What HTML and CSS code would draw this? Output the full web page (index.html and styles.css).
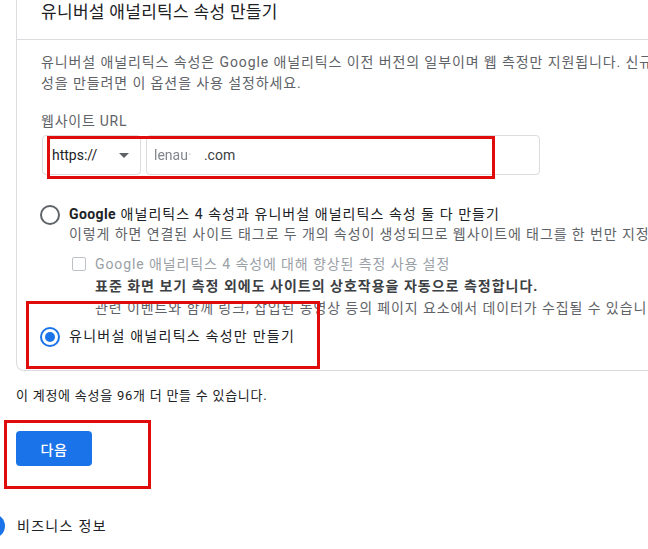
FILE: index.html
```html
<!DOCTYPE html>
<html lang="ko">
<head>
<meta charset="utf-8">
<title>유니버설 애널리틱스 속성 만들기</title>
<link rel="stylesheet" href="styles.css">
</head>
<body>
<div class="page">
  <section class="card">
    <div class="card-header">
      <h2 class="title">유니버설 애널리틱스 속성 만들기</h2>
    </div>
    <div class="card-body">
      <p class="desc">
        <span class="line">유니버설 애널리틱스 속성은 Google 애널리틱스 이전 버전의 일부이며 웹 측정만 지원됩니다. 신규 Google 애널리틱스 4 속</span>
        <span class="line">성을 만들려면 이 옵션을 사용 설정하세요.</span>
      </p>
      <div class="field-label">웹사이트 URL</div>
      <div class="url-group">
        <div class="select">
          <span class="select-text">https://</span>
          <span class="caret"></span>
        </div>
        <div class="url-input"><span class="smudge">lenau</span><span class="smudge faint">·</span><span class="url-tail">.com</span></div>
      </div>

      <div class="options">
        <div class="option">
          <span class="radio"></span>
          <div class="option-text">
            <div class="option-label"><span class="brand">Google</span> 애널리틱스 4 속성과 유니버설 애널리틱스 속성 둘 다 만들기</div>
            <div class="option-help">이렇게 하면 연결된 사이트 태그로 두 개의 속성이 생성되므로 웹사이트에 태그를 한 번만 지정하면 됩니다.</div>
            <div class="sub-option">
              <span class="checkbox"></span>
              <div class="sub-text">
                <div class="sub-label">Google 애널리틱스 4 속성에 대해 향상된 측정 사용 설정</div>
                <div class="sub-strong">표준 화면 보기 측정 외에도 사이트의 상호작용을 자동으로 측정합니다.</div>
                <div class="sub-help">관련 이벤트와 함께 링크, 삽입된 동영상 등의 페이지 요소에서 데이터가 수집될 수 있습니다.</div>
              </div>
            </div>
          </div>
        </div>
        <div class="option option-selected">
          <span class="radio checked"></span>
          <div class="option-text">
            <div class="option-label wide">유니버설 애널리틱스 속성만 만들기</div>
          </div>
        </div>
      </div>
    </div>
    <span class="mark mark-url"></span>
    <span class="mark mark-option"></span>
  </section>

  <p class="quota">이 계정에 속성을 96개 더 만들 수 있습니다.</p>

  <div class="actions">
    <button class="btn-primary" type="button">다음</button>
    <span class="mark mark-button"></span>
  </div>

  <div class="step">
    <span class="step-dot"></span>
    <span class="step-label">비즈니스 정보</span>
  </div>
</div>
</body>
</html>
```
FILE: styles.css
```css
* { box-sizing: border-box; }

html, body {
  margin: 0;
  padding: 0;
  background: #ffffff;
}

body {
  font-family: Roboto, "Noto Sans CJK KR", "Noto Sans", sans-serif;
  color: #202124;
  -webkit-font-smoothing: antialiased;
}

.page {
  position: relative;
  width: 648px;
  height: 549px;
  overflow: hidden;
}

/* ---------- card ---------- */
.card {
  position: relative;
  width: 780px;
  margin-left: 16px;
  border: 1px solid #dadce0;
  border-top: none;
  border-radius: 0 0 8px 8px;
}

.card-header {
  height: 40px;
  border-bottom: 1px solid #dadce0;
  padding-left: 24px;
}

.title {
  margin: 0;
  font-size: 17px;
  line-height: 24px;
  font-weight: 400;
  letter-spacing: 0.3px;
  color: #202124;
}

.card-body {
  padding: 12px 24px 23px 24px;
}

.desc {
  margin: 0;
  font-size: 14px;
  line-height: 21px;
  letter-spacing: 0.9px;
  color: #5f6368;
}

.desc .line {
  display: block;
  white-space: nowrap;
}

.field-label {
  margin-top: 17px;
  font-size: 14px;
  line-height: 20px;
  letter-spacing: 0.75px;
  color: #5f6368;
}

.url-group {
  display: flex;
  gap: 5px;
  margin-top: 4px;
  margin-left: 1px;
  height: 40px;
}

.select {
  width: 99px;
  border: 1px solid #dadce0;
  border-radius: 4px;
  display: flex;
  align-items: center;
  padding-left: 9px;
}

.select-text {
  font-size: 14px;
  color: #202124;
}

.caret {
  margin-left: 22px;
  width: 0;
  height: 0;
  border-left: 5px solid transparent;
  border-right: 5px solid transparent;
  border-top: 5px solid #5f6368;
}

.url-input {
  width: 394px;
  border: 1px solid #dadce0;
  border-radius: 4px;
  display: flex;
  align-items: center;
  padding-left: 7px;
  font-size: 14px;
  color: #3c4043;
}

.smudge {
  filter: blur(0.7px);
  color: #80868b;
}

.faint {
  display: inline-block;
  width: 16px;
  color: #c8c8c8;
}

.url-tail {
  color: #3c4043;
}

/* ---------- options ---------- */
.options {
  margin-top: 29px;
  display: flex;
  flex-direction: column;
  gap: 7px;
}

.option {
  display: flex;
  align-items: flex-start;
  gap: 9px;
  margin-left: -1px;
}

.radio {
  flex: none;
  width: 20px;
  height: 20px;
  margin-top: 1px;
  border: 2px solid #5f6368;
  border-radius: 50%;
  display: flex;
  align-items: center;
  justify-content: center;
}

.radio.checked {
  border-color: #1a73e8;
}

.radio.checked::after {
  content: "";
  width: 10px;
  height: 10px;
  border-radius: 50%;
  background: #1a73e8;
}

.option-label {
  font-size: 14px;
  line-height: 20px;
  letter-spacing: 1.05px;
  color: #202124;
  white-space: nowrap;
}

.option-label.wide {
  letter-spacing: 1.25px;
}

.brand {
  font-weight: 700;
  letter-spacing: 0.4px;
}

.option-help {
  font-size: 14px;
  line-height: 20px;
  letter-spacing: 0.9px;
  color: #5f6368;
  white-space: nowrap;
}

.sub-option {
  display: flex;
  align-items: flex-start;
  gap: 9px;
  margin-top: 9px;
  margin-left: 3px;
}

.checkbox {
  flex: none;
  width: 14px;
  height: 14px;
  margin-top: 4px;
  border: 1.5px solid #bdc1c6;
  border-radius: 2px;
}

.sub-text {
  font-size: 14px;
  line-height: 22px;
  letter-spacing: 0.9px;
  white-space: nowrap;
}

.sub-label {
  color: #9aa0a6;
}

.sub-strong {
  font-weight: 700;
  letter-spacing: 1px;
  color: #3c4043;
}

.sub-help {
  color: #5f6368;
}

/* ---------- below card ---------- */
.quota {
  margin: 15px 0 0 16px;
  font-size: 13px;
  line-height: 20px;
  letter-spacing: 0.75px;
  color: #202124;
}

.actions {
  position: relative;
  margin-top: 25px;
  margin-left: 16px;
}

.btn-primary {
  width: 76px;
  height: 35px;
  border: none;
  border-radius: 4px;
  background: #1a73e8;
  color: #ffffff;
  font-family: Roboto, "Noto Sans CJK KR", sans-serif;
  font-size: 14px;
  font-weight: 500;
  letter-spacing: 0.5px;
  padding: 0;
}

.step {
  display: flex;
  align-items: center;
  gap: 12px;
  margin-top: 48px;
  margin-left: -19px;
}

.step-dot {
  flex: none;
  width: 24px;
  height: 24px;
  border-radius: 50%;
  background: #1a73e8;
}

.step-label {
  font-size: 14px;
  line-height: 24px;
  letter-spacing: 1.3px;
  color: #202124;
}

/* ---------- red annotation boxes ---------- */
.mark {
  position: absolute;
  border: 3px solid #e00b0b;
  pointer-events: none;
}

.mark-url {
  left: 30px;
  top: 136px;
  width: 448px;
  height: 43px;
}

.mark-option {
  left: 9px;
  top: 301px;
  width: 294px;
  height: 68px;
}

.mark-button {
  left: -12px;
  top: -11px;
  width: 147px;
  height: 69px;
}
```
